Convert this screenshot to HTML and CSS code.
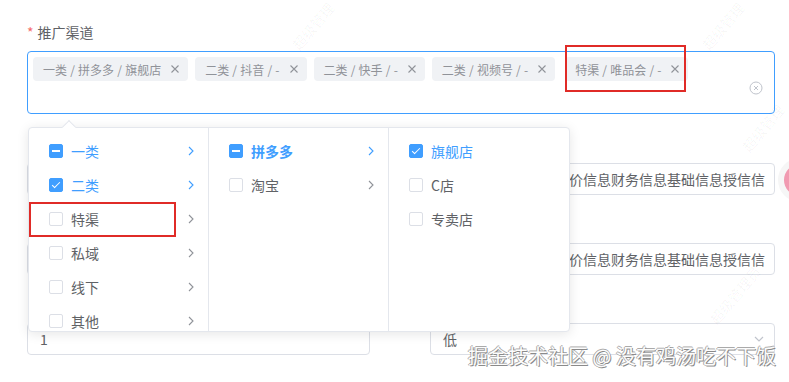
FILE: index.html
```html
<!DOCTYPE html>
<html>
<head>
    <meta charset="utf-8">
    <title>推广渠道</title>
    <link rel="stylesheet" href="styles.css">
</head>
<body>
    <div class="page">
        <div class="form-item">
            <label class="label"><span class="req">*</span>推广渠道</label>
            <div class="select is-focus">
                <div class="tags">
                    <span class="tag">一类 / 拼多多 / 旗舰店<i class="tag-close"><svg viewBox="0 0 10 10"><path d="M1.5 1.5L8.5 8.5M8.5 1.5L1.5 8.5"/></svg></i></span>
                    <span class="tag">二类 / 抖音 / -<i class="tag-close"><svg viewBox="0 0 10 10"><path d="M1.5 1.5L8.5 8.5M8.5 1.5L1.5 8.5"/></svg></i></span>
                    <span class="tag">二类 / 快手 / -<i class="tag-close"><svg viewBox="0 0 10 10"><path d="M1.5 1.5L8.5 8.5M8.5 1.5L1.5 8.5"/></svg></i></span>
                    <span class="tag">二类 / 视频号 / -<i class="tag-close"><svg viewBox="0 0 10 10"><path d="M1.5 1.5L8.5 8.5M8.5 1.5L1.5 8.5"/></svg></i></span>
                    <span class="tag tag-last">特渠 / 唯品会 / -<i class="tag-close"><svg viewBox="0 0 10 10"><path d="M1.5 1.5L8.5 8.5M8.5 1.5L1.5 8.5"/></svg></i></span>
                </div>
                <span class="clear">
                    <svg viewBox="0 0 14 14"><circle cx="7" cy="7" r="6"/><path d="M5 5L9 9M9 5L5 9"/></svg>
                </span>
            </div>
        </div>

        <!-- fields under the open dropdown: their labels are covered by it -->
        <div class="grid">
            <div class="field">
                <span class="label"></span>
                <input class="input" readonly>
            </div>
            <div class="field">
                <span class="label"></span>
                <input class="input" value="企业基本信息经营评价信息财务信息基础信息授信信息" readonly>
            </div>
            <div class="field">
                <span class="label"></span>
                <input class="input" readonly>
            </div>
            <div class="field">
                <span class="label"></span>
                <input class="input" value="企业基本信息经营评价信息财务信息基础信息授信信息" readonly>
            </div>
            <div class="field">
                <span class="label"></span>
                <input class="input" value="1" readonly>
            </div>
            <div class="field">
                <span class="label"></span>
                <div class="input select-single">
                    <span>低</span>
                    <svg class="caret" viewBox="0 0 12 12"><path d="M2 4L6 8L10 4"/></svg>
                </div>
            </div>
        </div>

        <!-- cascader dropdown -->
        <div class="cascader">
            <span class="popper-arrow"></span>
            <ul class="menu">
                <li class="node active"><span class="check half"></span><span class="node-label">一类</span><svg class="chevron" viewBox="0 0 12 12"><path d="M4 2L8 6L4 10"/></svg></li>
                <li class="node active"><span class="check on"></span><span class="node-label">二类</span><svg class="chevron" viewBox="0 0 12 12"><path d="M4 2L8 6L4 10"/></svg></li>
                <li class="node"><span class="check"></span><span class="node-label">特渠</span><svg class="chevron" viewBox="0 0 12 12"><path d="M4 2L8 6L4 10"/></svg></li>
                <li class="node"><span class="check"></span><span class="node-label">私域</span><svg class="chevron" viewBox="0 0 12 12"><path d="M4 2L8 6L4 10"/></svg></li>
                <li class="node"><span class="check"></span><span class="node-label">线下</span><svg class="chevron" viewBox="0 0 12 12"><path d="M4 2L8 6L4 10"/></svg></li>
                <li class="node"><span class="check"></span><span class="node-label">其他</span><svg class="chevron" viewBox="0 0 12 12"><path d="M4 2L8 6L4 10"/></svg></li>
            </ul>
            <ul class="menu">
                <li class="node active bold"><span class="check half"></span><span class="node-label">拼多多</span><svg class="chevron" viewBox="0 0 12 12"><path d="M4 2L8 6L4 10"/></svg></li>
                <li class="node"><span class="check"></span><span class="node-label">淘宝</span><svg class="chevron" viewBox="0 0 12 12"><path d="M4 2L8 6L4 10"/></svg></li>
            </ul>
            <ul class="menu">
                <li class="node active"><span class="check on"></span><span class="node-label">旗舰店</span></li>
                <li class="node"><span class="check"></span><span class="node-label">C店</span></li>
                <li class="node"><span class="check"></span><span class="node-label">专卖店</span></li>
            </ul>
        </div>

        <!-- annotations -->
        <span class="mark mark-tag"></span>
        <span class="mark mark-node"></span>

        <span class="wm wm-1">超级管理</span>
        <span class="wm wm-2">超级管理</span>
        <span class="wm wm-3">超级管理</span>
        <span class="wm wm-4">超级管理员</span>
        <span class="avatar"></span>
        <span class="credit">掘金技术社区 @ 没有鸡汤吃不下饭</span>
    </div>
</body>
</html>
```

FILE: styles.css
```css
* {
    box-sizing: border-box;
}

body {
    margin: 0;
    background-color: #fff;
    font-family: "Noto Sans CJK SC", "Noto Sans", sans-serif;
    color: #606266;
    overflow: hidden;
}

.page {
    position: relative;
    width: 789px;
    height: 382px;
    padding: 21px 14px 0 27px;
}

.label {
    display: block;
    height: 22px;
    font-size: 14px;
    line-height: 22px;
    color: #606266;
}

.req {
    color: #f56c6c;
    margin-right: 4px;
}

.form-item .label {
    margin-bottom: 8px;
}

.select {
    position: relative;
    height: 63px;
    border: 1px solid #409eff;
    border-radius: 4px;
    padding: 5px 40px 0 5px;
}

.tags {
    display: flex;
    flex-wrap: wrap;
    gap: 6px 7px;
}

.tag {
    display: inline-flex;
    align-items: center;
    height: 24px;
    padding: 0 5px 0 10px;
    background-color: #f0f2f5;
    border-radius: 4px;
    font-size: 12px;
    color: #909399;
    white-space: pre;
    word-spacing: 0.5px;
}

.tag-last {
    margin-left: 3px;
}

.tag-close {
    display: inline-flex;
    align-items: center;
    justify-content: center;
    width: 16px;
    height: 16px;
    margin-left: 6px;
}

.tag-close svg {
    width: 10px;
    height: 10px;
    fill: none;
    stroke: #909399;
    stroke-width: 1.1;
}

.clear {
    position: absolute;
    right: 11px;
    top: 24px;
    width: 14px;
    height: 14px;
}

.clear svg {
    width: 14px;
    height: 14px;
    fill: none;
    stroke: #c0c4cc;
    stroke-width: 1;
}

.grid {
    display: grid;
    grid-template-columns: 343px 345px;
    column-gap: 60px;
    row-gap: 16px;
    margin-top: 17px;
}

.field .label {
    margin-bottom: 10px;
}

.input {
    display: block;
    width: 100%;
    height: 32px;
    padding: 0 9px 0 12px;
    border: 1px solid #dcdfe6;
    border-radius: 4px;
    font-family: inherit;
    font-size: 14px;
    color: #606266;
    background: #fff;
    outline: none;
}

.select-single {
    display: flex;
    align-items: center;
    justify-content: space-between;
}

.caret {
    width: 12px;
    height: 12px;
    fill: none;
    stroke: #c0c4cc;
    stroke-width: 1.2;
}

.cascader {
    position: absolute;
    left: 28px;
    top: 127px;
    display: flex;
    height: 205px;
    background: #fff;
    border: 1px solid #e4e7ed;
    border-radius: 4px;
    box-shadow: 0 2px 12px rgba(0, 0, 0, 0.1);
}

.popper-arrow {
    position: absolute;
    top: -6px;
    left: 35px;
    width: 10px;
    height: 10px;
    background: #fff;
    border-left: 1px solid #e4e7ed;
    border-top: 1px solid #e4e7ed;
    transform: rotate(45deg);
}

.menu {
    list-style: none;
    margin: 0;
    width: 180px;
    padding: 6px 0;
    overflow: hidden;
    border-right: 1px solid #e4e7ed;
}

.menu:last-child {
    border-right: 0;
}

.node {
    display: flex;
    align-items: center;
    height: 34px;
    padding: 0 11px 0 20px;
    font-size: 14px;
    color: #606266;
}

.node.active {
    color: #409eff;
}

.node.bold {
    font-weight: 600;
}

.node-label {
    flex: 1;
}

.check {
    position: relative;
    width: 14px;
    height: 14px;
    margin-right: 8px;
    border: 1px solid #dcdfe6;
    border-radius: 2px;
    background: #fff;
}

.check.on,
.check.half {
    background: #409eff;
    border-color: #409eff;
}

.check.half::after {
    content: "";
    position: absolute;
    left: 2px;
    right: 2px;
    top: 5px;
    height: 2px;
    background: #fff;
}

.check.on::after {
    content: "";
    position: absolute;
    left: 4px;
    top: 1px;
    width: 3px;
    height: 7px;
    border: 1px solid #fff;
    border-left: 0;
    border-top: 0;
    transform: rotate(45deg);
}

.chevron {
    width: 12px;
    height: 12px;
    fill: none;
    stroke: #909399;
    stroke-width: 1.1;
}

.node.active .chevron {
    stroke: #409eff;
}

.mark {
    position: absolute;
    border: 2px solid #e02b27;
}

.mark-tag {
    left: 565px;
    top: 45px;
    width: 121px;
    height: 47px;
}

.mark-node {
    left: 29px;
    top: 202px;
    width: 147px;
    height: 35px;
}

.wm {
    position: absolute;
    font-size: 14px;
    color: rgba(0, 0, 0, 0.04);
    transform: rotate(-50deg);
    white-space: nowrap;
}

.wm-1 {
    left: 285px;
    top: 16px;
}

.wm-2 {
    left: 695px;
    top: 16px;
}

.wm-3 {
    left: 735px;
    top: 118px;
}

.wm-4 {
    left: 700px;
    top: 285px;
}

.avatar {
    position: absolute;
    left: 784px;
    top: 164px;
    width: 32px;
    height: 32px;
    border-radius: 50%;
    background: #f19ab1;
    box-shadow: 0 0 0 6px #f6f6f6;
}

.credit {
    position: absolute;
    left: 468px;
    top: 343px;
    font-size: 20px;
    line-height: 26px;
    color: #fcfcfc;
    white-space: nowrap;
    text-shadow: 1px 1px 0 #8a8a8a, -1px 0 0 #aaa, 0 -1px 0 #aaa;
}
```
